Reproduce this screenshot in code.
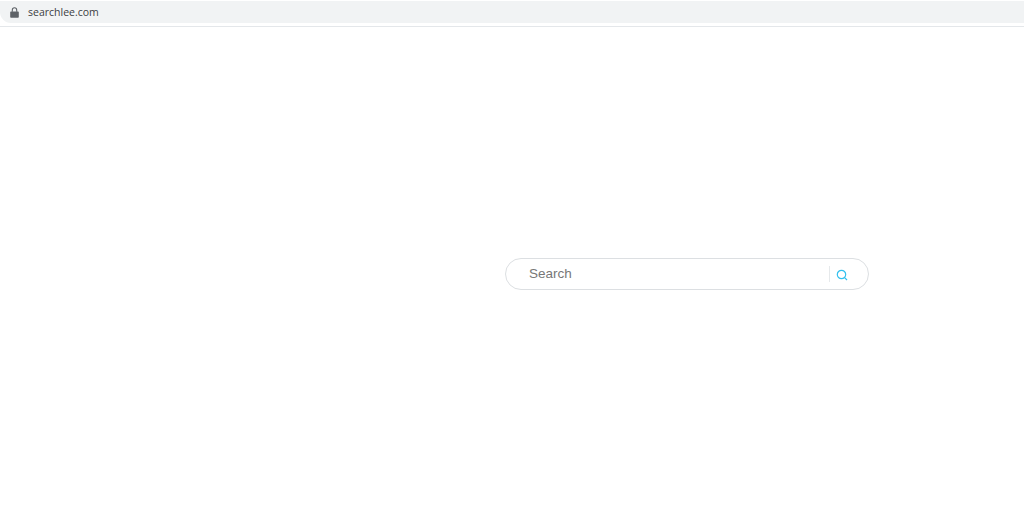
<style>
:global(body) { margin: 0; background: #fff; }
.page { width: 1024px; height: 527px; overflow: hidden; display: flex; flex-direction: column; background: #fff; }
.chrome { height: 27px; flex: none; box-sizing: border-box; padding-top: 1px; border-bottom: 1px solid #e4e7ea; }
.bar { height: 22px; box-sizing: border-box; background: #f1f3f4; border-radius: 0 0 0 11px; display: flex; align-items: center; padding-left: 10px; gap: 9px; }
.lock { width: 9px; height: 11px; display: block; }
.url { font: 10.5px "Open Sans", "Liberation Sans", sans-serif; color: #3c4043; }
.main { flex: 1; display: flex; justify-content: flex-start; padding: 231px 0 0 505px; }
.search { width: 364px; height: 32px; box-sizing: border-box; border: 1px solid #dcdfe2; border-radius: 16px; display: flex; align-items: center; padding-left: 23px; }
.label { flex: 1; font: 13.500px "Liberation Sans", Arial, sans-serif; color: #777; padding-bottom: 1px; }
.divider { width: 1px; height: 16px; background: #e6e9eb; }
.icon { width: 12px; height: 12px; display: block; margin: 2px 20px 0 6px; }
</style>

<div class="page">
  <div class="chrome">
    <div class="bar">
      <svg class="lock" viewBox="0 0 9 11"><path d="M1 4.500h7a.8.8 0 0 1 .8.8v4.600a.8.8 0 0 1-.8.8H1a.8.8 0 0 1-.8-.8V5.300A.8.8 0 0 1 1 4.500z" fill="#5f6368"/><path d="M2.300 4.700V3a2.200 2.200 0 0 1 4.400 0v1.700" fill="none" stroke="#5f6368" stroke-width="1.100"/></svg>
      <span class="url">searchlee.com</span>
    </div>
  </div>
  <div class="main">
    <div class="search">
      <span class="label">Search</span>
      <span class="divider"></span>
      <svg class="icon" viewBox="0 0 12 12"><circle cx="5.500" cy="5.500" r="4.200" fill="none" stroke="#33c0ee" stroke-width="1.200"/><path d="M8.600 8.600L11 11" stroke="#33c0ee" stroke-width="1.200" fill="none"/></svg>
    </div>
  </div>
</div>
